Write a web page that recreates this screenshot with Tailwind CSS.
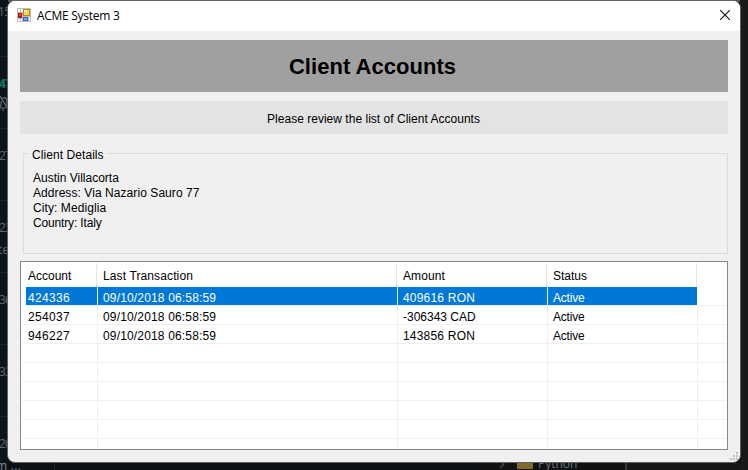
<!DOCTYPE html>
<html lang="en">
<head>
<meta charset="utf-8">
<title>ACME System 3</title>
<script src="https://cdn.jsdelivr.net/npm/@tailwindcss/browser@4"></script>
</head>
<body class="relative w-[748px] h-[470px] overflow-hidden bg-[#0c1114] font-['Liberation_Sans',Arial,sans-serif] text-[12px] leading-[15px] text-black">
<!-- Desktop behind the dialog -->
<div class="absolute inset-0 overflow-hidden font-['Open_Sans',sans-serif] text-[12px] leading-[16px] text-[#5d6a73] whitespace-nowrap">
  <div class="absolute left-0 top-0 w-full h-[2px] bg-[#555558]"></div>
  <div class="absolute left-0 top-0 w-[8px] h-full overflow-hidden bg-[#0c1419]">
    <div class="absolute top-[56px] w-full h-px bg-[#1b2429]"></div>
    <div class="absolute top-[128px] w-full h-px bg-[#1b2429]"></div>
    <div class="absolute top-[200px] w-full h-px bg-[#1b2429]"></div>
    <div class="absolute top-[272px] w-full h-px bg-[#1b2429]"></div>
    <div class="absolute top-[344px] w-full h-px bg-[#1b2429]"></div>
    <div class="absolute top-[416px] w-full h-px bg-[#1b2429]"></div>
    <span class="absolute left-[-2px] top-[4px] tracking-[-0.5px]">15</span>
    <span class="absolute left-[-1px] top-[76px] font-bold tracking-[-0.8px] text-[#087f62]">47</span>
    <svg class="absolute left-0 top-[95px]" width="8" height="17" fill="none" stroke="#66717a" stroke-width="1.2"><path d="M0 1 8 14M2 4C4 1 7 3 7 7V10M0 12C2 10 1 7 1 6M0 13H6M2 15H4"/></svg>
    <span class="absolute left-[-1px] top-[148px] tracking-[-0.8px]">27</span>
    <span class="absolute left-[-1px] top-[220px] tracking-[-0.8px]">23</span>
    <span class="absolute left-[-2px] top-[242px]">te</span>
    <span class="absolute left-[-1px] top-[292px] tracking-[-0.8px]">36</span>
    <span class="absolute left-[-1px] top-[364px] tracking-[-0.8px]">33</span>
    <span class="absolute left-[-1px] top-[436px] tracking-[-0.8px]">20</span>
  </div>
  <span class="absolute left-[-4px] top-[458px] tracking-[0.3px] text-[#7b858c]">m ...</span>
  <div class="absolute left-[54px] top-[463px] w-px h-[7px] bg-[#20272a]"></div>
  <div class="absolute left-[478px] top-[463px] w-[148px] h-[7px] bg-[#111112]"></div>
  <div class="absolute left-[625px] top-[463px] w-[2px] h-[7px] bg-[#363636]"></div>
  <div class="absolute left-[627px] top-[463px] w-[121px] h-[7px] bg-[#171717]"></div>
  <div class="absolute left-[740px] top-0 w-[8px] h-full bg-[#191919]"></div>
  <svg class="absolute left-[498px] top-[460px]" width="9" height="10" fill="none" stroke="#454545" stroke-width="1.5"><path d="M2 0 6 4 2 8"/></svg>
  <div class="absolute left-[517px] top-[460px] w-[16px] h-[9px] rounded-b-[1px] bg-[#80692b]"></div>
  <span class="absolute left-[538px] top-[456px] text-[#6b747e]">Python</span>
</div>

<!-- Dialog -->
<main class="absolute left-[7px] top-0 w-[734px] h-[463px] rounded-[8px] border border-[#606163] bg-[#f0f0f0] overflow-hidden flex flex-col">
  <header class="h-[30px] shrink-0 bg-white flex items-center pl-[9px] pr-[9px]">
    <svg class="-mt-[2px]" width="14" height="14" viewBox="0 0 14 14" shape-rendering="crispEdges">
      <path fill="#bdbdbd" d="M0 0H14V14H0Z"/>
      <path fill="#fff" d="M1 1H3V4H1ZM4 1H6V4H4ZM1 11H3V13H1ZM4 11H5V13H4ZM12 9H13V13H12Z"/>
      <path fill="#a9201d" d="M1 5H5V10H1Z"/><path fill="#e24b3f" d="M2 6H4V8H2Z"/>
      <path fill="#b9821b" d="M6 1H13V8H6Z"/><path fill="#ffd34c" d="M7 2H12V7H7Z"/><path fill="#fff0a6" d="M7 2H10V4H7Z"/>
      <path fill="#3266c3" d="M6 9H11V13H6Z"/><path fill="#78aaf2" d="M7 10H10V12H7Z"/>
    </svg>
    <h1 class="ml-[6px] font-['Open_Sans',sans-serif] text-[12px] leading-[16px] tracking-[-0.28px]">ACME System 3</h1>
    <svg class="ml-auto mt-[-2px] mr-[1px]" width="10" height="10" fill="none" stroke="#111" stroke-width="1.1"><path d="M0 0 10 10M10 0 0 10"/></svg>
  </header>
  <div class="px-[12px] pt-[9px] flex flex-col">
    <h2 class="h-[52px] bg-[#a0a0a0] flex items-center justify-center pr-[3px] pt-[1px] text-[22px] font-bold leading-none tracking-[0.03px]">Client Accounts</h2>
    <p class="mt-[9px] h-[33px] bg-[#e3e3e3] flex items-center justify-center pt-[4px] pr-[1px] tracking-[0.02px]">Please review the list of Client Accounts</p>
    <fieldset class="ml-[3px] mt-[12px] h-[108px] border border-[#dcdcdc] pl-[9px]">
      <legend class="ml-[-4px] pl-[3px] pr-[2px] h-[15px] pt-[2px] tracking-[0.07px]">Client Details</legend>
      <div class="pt-[10px] whitespace-nowrap">
        <p>Austin Villacorta</p><p class="tracking-[0.07px]">Address: Via Nazario Sauro 77</p><p class="tracking-[0.08px]">City: Mediglia</p><p class="tracking-[-0.15px]">Country: Italy</p>
      </div>
    </fieldset>
    <section class="mt-[7px] h-[189px] border border-[#828790] bg-white px-[1px] pt-[1px] pb-[1px] flex flex-col overflow-hidden">
      <div class="h-[24px] shrink-0 flex pt-[1px]">
        <div class="w-[75px] border-r border-[#e5e5e5] -mt-px pt-[6px] pl-[6px]">Account</div>
        <div class="w-[300px] border-r border-[#e5e5e5] -mt-px pt-[6px] pl-[6px] tracking-[0.12px]">Last Transaction</div>
        <div class="w-[150px] border-r border-[#e5e5e5] -mt-px pt-[6px] pl-[6px] tracking-[0.12px]">Amount</div>
        <div class="w-[150px] border-r border-[#e5e5e5] -mt-px pt-[6px] pl-[6px]">Status</div>
      </div>
      <div class="h-[19px] shrink-0 flex border-b border-[#f0f0f0] text-white pl-[4px]">
        <div class="w-[72px] bg-[#0078d7] border-r border-[#f0f0f0] pt-[4px] pl-[2px] tracking-[0.35px]">424336</div>
        <div class="w-[300px] bg-[#0078d7] border-r border-[#f0f0f0] pt-[4px] pl-[5px] tracking-[0.16px]">09/10/2018 06:58:59</div>
        <div class="w-[150px] bg-[#0078d7] border-r border-[#f0f0f0] pt-[4px] pl-[5px] tracking-[0.2px]">409616 RON</div>
        <div class="w-[149px] bg-[#0078d7] pt-[4px] pl-[5px] tracking-[-0.2px]">Active</div>
      </div>
      <div class="h-[19px] shrink-0 flex border-b border-[#f0f0f0]">
        <div class="w-[76px] border-r border-[#f0f0f0] pt-[4px] pl-[6px] tracking-[0.35px]">254037</div>
        <div class="w-[300px] border-r border-[#f0f0f0] pt-[4px] pl-[5px] tracking-[0.16px]">09/10/2018 06:58:59</div>
        <div class="w-[150px] border-r border-[#f0f0f0] pt-[4px] pl-[5px]">-306343 CAD</div>
        <div class="w-[150px] border-r border-[#f0f0f0] pt-[4px] pl-[5px] tracking-[-0.2px]">Active</div>
      </div>
      <div class="h-[19px] shrink-0 flex border-b border-[#f0f0f0]">
        <div class="w-[76px] border-r border-[#f0f0f0] pt-[4px] pl-[6px] tracking-[0.35px]">946227</div>
        <div class="w-[300px] border-r border-[#f0f0f0] pt-[4px] pl-[5px] tracking-[0.16px]">09/10/2018 06:58:59</div>
        <div class="w-[150px] border-r border-[#f0f0f0] pt-[4px] pl-[5px] tracking-[0.2px]">143856 RON</div>
        <div class="w-[150px] border-r border-[#f0f0f0] pt-[4px] pl-[5px] tracking-[-0.2px]">Active</div>
      </div>
      <div class="h-[19px] shrink-0 flex border-b border-[#f0f0f0]"><div class="w-[76px] border-r border-[#f0f0f0]"></div><div class="w-[300px] border-r border-[#f0f0f0]"></div><div class="w-[150px] border-r border-[#f0f0f0]"></div><div class="w-[150px] border-r border-[#f0f0f0]"></div></div>
      <div class="h-[19px] shrink-0 flex border-b border-[#f0f0f0]"><div class="w-[76px] border-r border-[#f0f0f0]"></div><div class="w-[300px] border-r border-[#f0f0f0]"></div><div class="w-[150px] border-r border-[#f0f0f0]"></div><div class="w-[150px] border-r border-[#f0f0f0]"></div></div>
      <div class="h-[19px] shrink-0 flex border-b border-[#f0f0f0]"><div class="w-[76px] border-r border-[#f0f0f0]"></div><div class="w-[300px] border-r border-[#f0f0f0]"></div><div class="w-[150px] border-r border-[#f0f0f0]"></div><div class="w-[150px] border-r border-[#f0f0f0]"></div></div>
      <div class="h-[19px] shrink-0 flex border-b border-[#f0f0f0]"><div class="w-[76px] border-r border-[#f0f0f0]"></div><div class="w-[300px] border-r border-[#f0f0f0]"></div><div class="w-[150px] border-r border-[#f0f0f0]"></div><div class="w-[150px] border-r border-[#f0f0f0]"></div></div>
      <div class="h-[19px] shrink-0 flex border-b border-[#f0f0f0]"><div class="w-[76px] border-r border-[#f0f0f0]"></div><div class="w-[300px] border-r border-[#f0f0f0]"></div><div class="w-[150px] border-r border-[#f0f0f0]"></div><div class="w-[150px] border-r border-[#f0f0f0]"></div></div>
      <div class="h-[9px] shrink-0 flex"><div class="w-[76px] border-r border-[#f0f0f0]"></div><div class="w-[300px] border-r border-[#f0f0f0]"></div><div class="w-[150px] border-r border-[#f0f0f0]"></div><div class="w-[150px] border-r border-[#f0f0f0]"></div></div>
    </section>
  </div>
  <svg class="absolute right-[2px] bottom-[2px]" width="8" height="8" fill="#bfbfbf" shape-rendering="crispEdges"><path d="M6 0h2v2h-2zM3 3h2v2h-2zM6 3h2v2h-2zM0 6h2v2h-2zM3 6h2v2h-2zM6 6h2v2h-2z"/></svg>
</main>
</body>
</html>
